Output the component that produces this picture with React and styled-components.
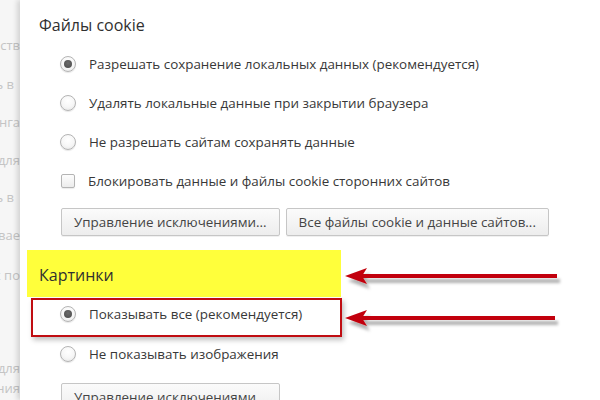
import React from "react";
import styled, { createGlobalStyle } from "styled-components";

const GlobalStyle = createGlobalStyle`
  html, body {
    margin: 0;
    padding: 0;
    background: #ffffff;
  }
`;

// Каркас страницы
const Page = styled.div`
  position: relative;
  width: 600px;
  height: 400px;
  overflow: hidden;
  display: flex;
  font-family: "Open Sans", "Noto Sans", sans-serif;
  color: #333333;
`;

const Sidebar = styled.div`
  width: 20px;
  flex: none;
  background: #f6f6f6;
  overflow: hidden;
  padding-top: 36px;
  display: flex;
  flex-direction: column;
`;

const SideItem = styled.div`
  height: ${(props) => props.$h || 38}px;
  line-height: 18px;
  font-size: 13px;
  color: #c4c4c4;
  white-space: nowrap;
  display: flex;
  justify-content: flex-end;
  padding-right: ${(props) => props.$pr || 0}px;
`;

const Main = styled.div`
  position: relative;
  z-index: 1;
  flex: 1;
  background: #ffffff;
  box-shadow: -3px 0 5px rgba(0, 0, 0, 0.14);
  padding: 14px 0 0 19px;
`;

const SectionTitle = styled.div`
  font-size: 16px;
  line-height: 22px;
  height: 22px;
  margin-bottom: 8px;
  color: #303030;
`;

const HighlightTitle = styled.div`
  width: 314px;
  height: 47px;
  box-sizing: border-box;
  margin: 14px 0 0 -12px;
  padding: 3px 0 0 12px;
  background: #ffff3b;
  display: flex;
  align-items: center;
  font-size: 16px;
  color: #303030;
`;

const OptionRow = styled.div`
  height: 39px;
  display: flex;
  align-items: center;
  padding-left: 21px;
  margin-top: ${(props) => (props.$pull ? -3 : 0)}px;
`;

const OutlinedRow = styled.div`
  width: 311px;
  height: 39px;
  box-sizing: border-box;
  margin: 1px 0 0 -8px;
  padding-left: 27px;
  border: 2px solid #c00d12;
  box-shadow: 2px 3px 5px rgba(0, 0, 0, 0.25);
  display: flex;
  align-items: flex-start;
`;

const OutlinedInner = styled.div`
  height: 28px;
  display: flex;
  align-items: center;
`;

const Radio = styled.span`
  position: relative;
  width: 16px;
  height: 16px;
  box-sizing: border-box;
  flex: none;
  border-radius: 50%;
  border: 1px solid #b4b4b4;
  background: radial-gradient(circle at 50% 35%, #ffffff 0%, #f6f6f6 55%, #e2e2e2 100%);
  box-shadow: 0 1px 1px rgba(0, 0, 0, 0.1);

  &::after {
    content: "";
    display: ${(props) => (props.$checked ? "block" : "none")};
    position: absolute;
    left: 3px;
    top: 3px;
    width: 8px;
    height: 8px;
    border-radius: 50%;
    background: radial-gradient(circle at 50% 40%, #6a6a6a 0%, #4a4a4a 100%);
  }
`;

const Checkbox = styled.span`
  width: 14px;
  height: 14px;
  box-sizing: border-box;
  flex: none;
  margin-left: 1px;
  border-radius: 2px;
  border: 1px solid #b4b4b4;
  background: linear-gradient(#fdfdfd, #ececec);
  box-shadow: 0 1px 1px rgba(0, 0, 0, 0.08);
`;

const Label = styled.span`
  margin-left: ${(props) => props.$gap || 13}px;
  font-size: 13.4px;
  white-space: nowrap;
  color: #383838;
`;

const ButtonRow = styled.div`
  display: flex;
  gap: 6px;
  padding-left: 22px;
  margin-top: ${(props) => props.$mt || 8}px;
`;

const Button = styled.div`
  height: 28px;
  box-sizing: border-box;
  padding: 0 12px;
  display: flex;
  align-items: center;
  font-size: 13.4px;
  white-space: nowrap;
  color: #444444;
  border: 1px solid #c6c6c6;
  border-radius: 2px;
  background: linear-gradient(#fbfbfb, #ededed);
  box-shadow: 0 1px 0 rgba(0, 0, 0, 0.06);
`;

const Arrows = styled.svg`
  position: absolute;
  left: 0;
  top: 0;
  z-index: 2;
  pointer-events: none;
`;

const sideItems = [
  { t: "действ", pr: 0, h: 39 },
  { t: "сть в", pr: 6, h: 38 },
  { t: "ранга", pr: 0, h: 38 },
  { t: "для", pr: 0, h: 37 },
  { t: "сть в", pr: 6, h: 38 },
  { t: "ивае", pr: 0, h: 40 },
  { t: "к по", pr: 0, h: 93 },
  { t: "для", pr: 0, h: 20 },
  { t: "ния", pr: 0, h: 20 },
];

const Arrow = ({ y, end }) => (
  <g filter="url(#arrowShadow)">
    <line x1="360" y1={y} x2={end} y2={y} stroke="#c2000b" strokeWidth="4" />
    <polygon points={`345,${y} 367,${y - 8} 362,${y} 367,${y + 8}`} fill="#c2000b" />
  </g>
);

const App = () => {
  return (
    <>
      <GlobalStyle />
      <Page>
        <Sidebar>
          {sideItems.map((item, i) => (
            <SideItem key={i} $pr={item.pr} $h={item.h}>
              {item.t}
            </SideItem>
          ))}
        </Sidebar>
        <Main>
          <SectionTitle>Файлы cookie</SectionTitle>
          <OptionRow>
            <Radio $checked />
            <Label>Разрешать сохранение локальных данных (рекомендуется)</Label>
          </OptionRow>
          <OptionRow>
            <Radio />
            <Label>Удалять локальные данные при закрытии браузера</Label>
          </OptionRow>
          <OptionRow>
            <Radio />
            <Label>Не разрешать сайтам сохранять данные</Label>
          </OptionRow>
          <OptionRow>
            <Checkbox />
            <Label $gap={13}>Блокировать данные и файлы cookie сторонних сайтов</Label>
          </OptionRow>
          <ButtonRow>
            <Button>Управление исключениями...</Button>
            <Button>Все файлы cookie и данные сайтов...</Button>
          </ButtonRow>

          <HighlightTitle>Картинки</HighlightTitle>
          <OutlinedRow>
            <OutlinedInner>
              <Radio $checked />
              <Label>Показывать все (рекомендуется)</Label>
            </OutlinedInner>
          </OutlinedRow>
          <OptionRow $pull>
            <Radio />
            <Label>Не показывать изображения</Label>
          </OptionRow>
          <ButtonRow $mt={10}>
            <Button>Управление исключениями...</Button>
          </ButtonRow>
        </Main>

        <Arrows width="600" height="400" viewBox="0 0 600 400">
          <defs>
            <filter id="arrowShadow" x="-10%" y="-50%" width="120%" height="250%">
              <feDropShadow dx="3" dy="5" stdDeviation="1.6" floodColor="#000" floodOpacity="0.3" />
            </filter>
          </defs>
          <Arrow y={276} end={557} />
          <Arrow y={318} end={555} />
        </Arrows>
      </Page>
    </>
  );
};

export default App;
